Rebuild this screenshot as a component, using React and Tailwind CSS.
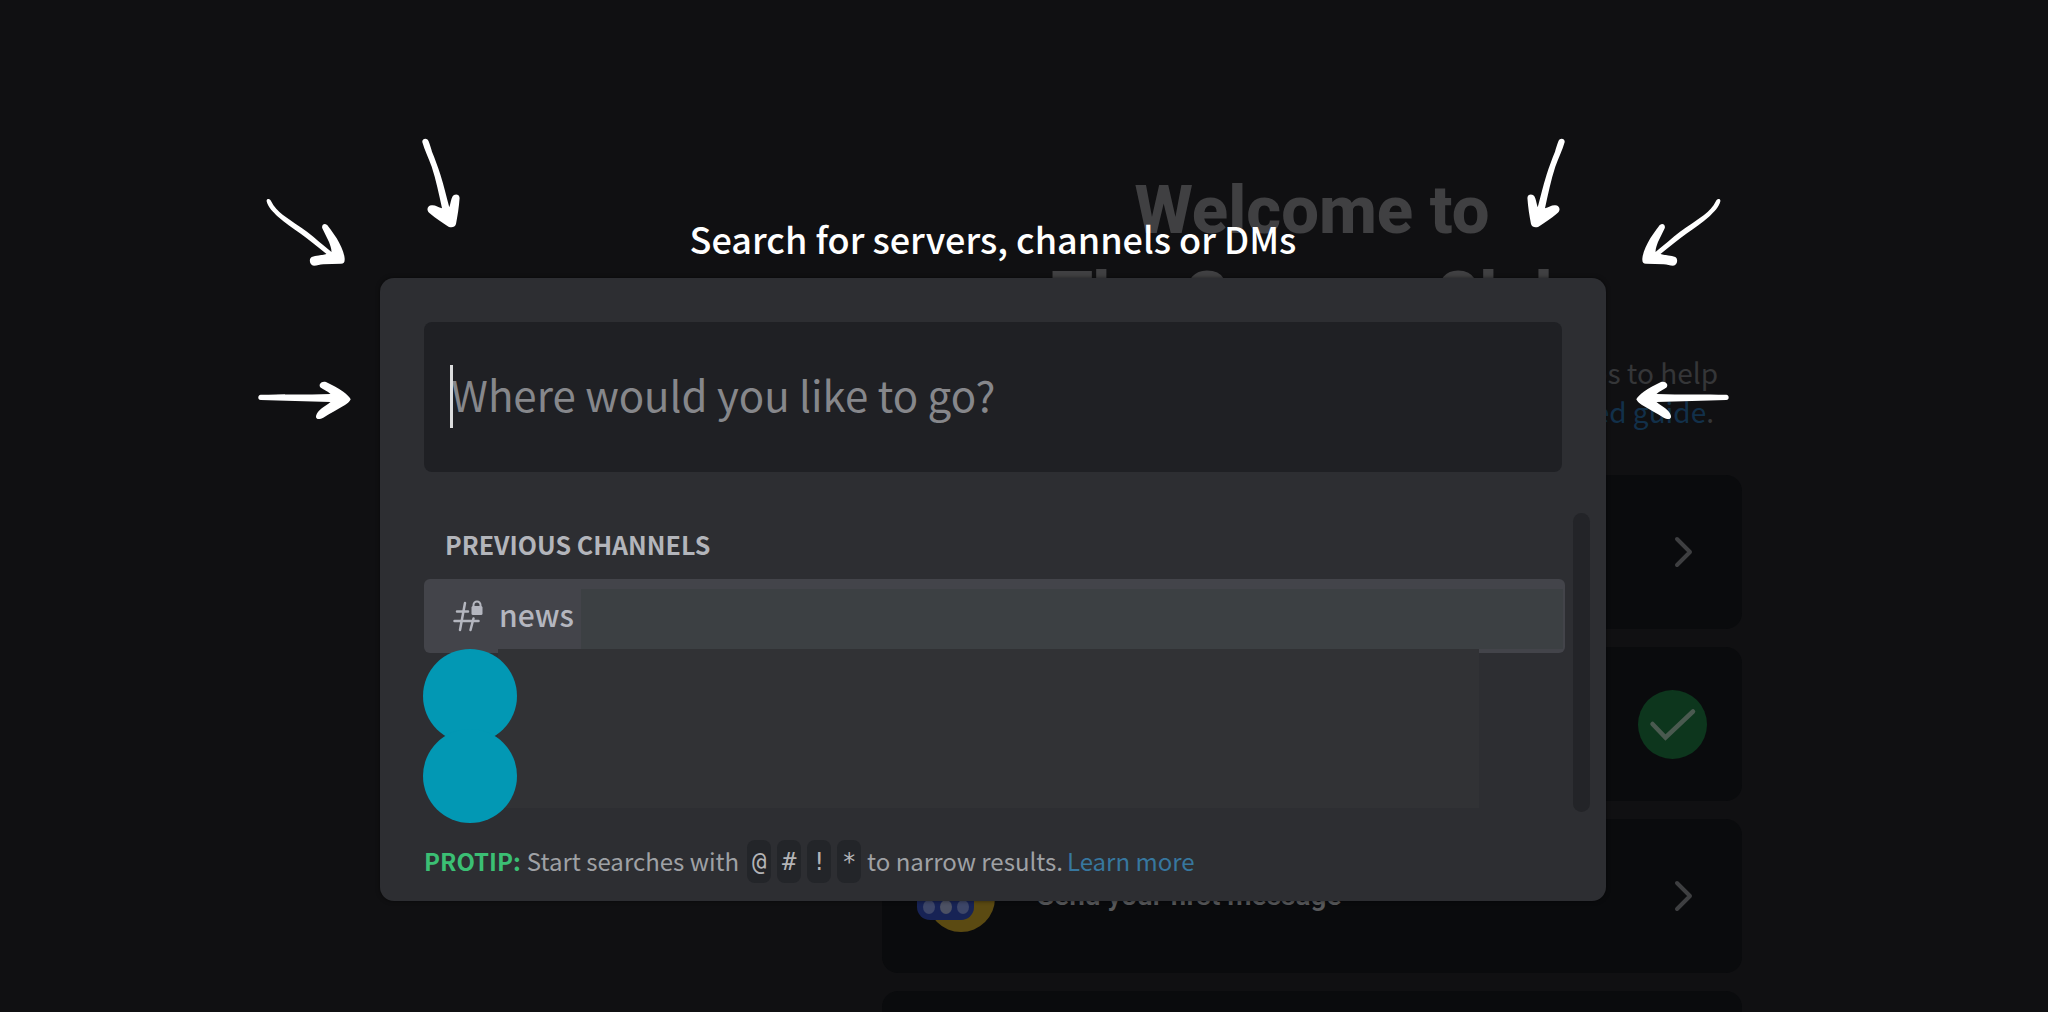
import React from "react";

const UI = "font-['Noto_Sans_CJK_SC','Noto_Sans',sans-serif]";
const DISPLAY = "font-['Roboto','Noto_Sans',sans-serif]";

function Chevron() {
  return (
    <svg viewBox="0 0 20 32" className="mr-12 h-8 w-5" fill="none" stroke="#3e3f41" strokeWidth="4" strokeLinecap="round" strokeLinejoin="round" aria-hidden="true">
      <path d="M3 3 L16 16 L3 29" />
    </svg>
  );
}

function DoneBadge() {
  return (
    <span className="mr-[35px] flex h-[69px] w-[69px] items-center justify-center rounded-full bg-[#0d361d]">
      <svg viewBox="0 0 69 69" className="h-full w-full" fill="none" stroke="#4a5a50" strokeWidth="4.500" strokeLinecap="round" aria-hidden="true">
        <path d="M14.500 34 L27.500 47.500 L55 21.500" />
      </svg>
    </span>
  );
}

function MessageArt() {
  return (
    <svg viewBox="0 0 84 84" className="ml-8 h-[84px] w-[84px]" aria-hidden="true">
      <circle cx="47" cy="44" r="34" fill="#5b4a12" />
      <rect x="3" y="30" width="57" height="36" rx="13" fill="#172355" />
      <ellipse cx="15" cy="53" rx="6" ry="7" fill="#3d4668" />
      <ellipse cx="32" cy="53" rx="6" ry="7" fill="#4c5163" />
      <ellipse cx="49" cy="53" rx="6" ry="7" fill="#3d4668" />
    </svg>
  );
}

function SetupCard({ art, title, end }) {
  return (
    <li>
      <button type="button" className="flex h-[154px] w-full items-center rounded-2xl bg-[#0a0b0d]">
        {art}
        {title && <span className={"ml-[39px] text-[28px] font-semibold text-[#57585a] " + DISPLAY}>{title}</span>}
        <span className="ml-auto">{end}</span>
      </button>
    </li>
  );
}

function WelcomePage() {
  return (
    <section className="mr-[306px] ml-auto w-[860px] pt-[167px]">
      <h1 className={"text-center text-[67px] leading-[86px] font-extrabold text-[#404042] " + DISPLAY}>
        Welcome to
        <br />
        The Gamers Club
      </h1>
      <p className="mt-[14px] flex flex-col pr-6 text-right text-[28px] leading-[39px] whitespace-nowrap text-[#353638]">
        <span>This is your brand new, shiny server. Here are some steps to help</span>
        <span className="pr-1">
          you get started. For more, check out our <a href="#guide" className="text-[#12304a]">Getting started guide</a>.
        </span>
      </p>
      <ul className="mt-11 flex flex-col gap-[18px]">
        <SetupCard end={<Chevron />} />
        <SetupCard end={<DoneBadge />} />
        <SetupCard art={<MessageArt />} title="Send your first message" end={<Chevron />} />
        <SetupCard end={<Chevron />} />
      </ul>
    </section>
  );
}

function Arrows({ className }) {
  return (
    <svg viewBox="0 0 204 284" className={"absolute -top-[140px] h-[284px] w-[204px] " + className} fill="#fff" aria-hidden="true">
      <path d="M166.300 4 C166 0.500 171 -0.500 172.500 3 C174 7 175 10 176 13.700 C179 21 182 29 184.500 37 C188 48 190.500 59 193.300 69.300 C194.500 66 195 61 196.500 58.500 C198 55.500 203.500 55.500 203.600 60 C203 69 201.500 78 200 86 C199 89 196 90 192.500 88.700 C186 85 179.500 80 174 75.600 C169.500 72.500 171.500 67 176 67.200 C179.500 67 182.500 69.300 186 70.300 C183 56 180 42 175.700 28.700 C172.500 20 168.500 12 166.300 4 Z" />
      <path d="M10.700 63.500 C10 60.500 13.500 60 15 63 C18 69 22 73 27 77 C35 83 43 88 51 93.700 C59 100 67 107 75.500 114 C75.500 110 74 107 73 104 L66.300 90.300 C65 86 70 84 72.500 88.700 C75 92 78 96 80.700 100.300 C84.500 107 88 114 88.600 120 C89 124 88 125.700 85 125.700 C79 125.700 73 126 67.300 126.300 C64 126.500 61 127.500 58 127.700 C53.500 127.500 52.500 121 55.700 119 C60 117.300 65 117.500 70.500 116 C62 109 53 102 44 95.300 C37 90 29 85 22 78.700 C17 74 12 69 10.700 63.500 Z" />
      <path d="M4.700 256.700 C25 256.500 50 256.800 74.500 256 C71.500 253 67.500 251.500 64.500 249.500 C62 246.500 65.500 242.500 70 244 C76 247 82 250 87.300 253.700 C91 256.500 93.500 259 94.700 261.300 C93.500 264 91.500 265.500 89 267 C81.500 271.500 74 275.500 67.300 279.700 C64 281.500 59.500 282 60 278 C61.500 271.500 69 268.500 74.500 264 C51 263.500 27 262.800 4.700 262 C1.500 262 1.500 257 4.700 256.700 Z" />
    </svg>
  );
}

function LockedHash() {
  return (
    <svg viewBox="0 0 34 34" className="h-[34px] w-[34px]" fill="none" stroke="#b4b6bf" strokeWidth="2.500" strokeLinecap="round" aria-hidden="true">
      <path d="M13 4 L8 31 M21.500 19.500 L18.500 31 M5 12.500 H16 M2.500 22 H26.500" />
      <path d="M21.500 9 V6 A3.500 3.500 0 0 1 28.500 6 V9" strokeWidth="2" />
      <rect x="19.500" y="7" width="11" height="9" rx="1.500" fill="#b4b6bf" stroke="none" />
    </svg>
  );
}

function Key({ children }) {
  return (
    <kbd className="flex h-[43px] w-6 items-center justify-center rounded-lg bg-[#232529] font-['DejaVu_Sans_Mono',monospace] text-[24px] text-[#b3b4b7]">
      {children}
    </kbd>
  );
}

function QuickSwitcher() {
  return (
    <div className="relative w-full max-w-[1226px]">
      <label htmlFor="switcher" className="absolute bottom-full left-0 w-full pb-[13px] text-center text-[36px] leading-[54px] font-medium whitespace-nowrap text-white">
        Search for servers, channels or DMs
      </label>
      <div role="dialog" aria-label="Quick switcher" className="rounded-[14px] bg-[#2d2e32] px-11 pt-11 pb-[18px] shadow-[0_0_4px_rgba(0,0,0,0.5)]">
        <div className="relative">
          <input id="switcher" type="text" placeholder="Where would you like to go?" className="h-[150px] w-full rounded-lg bg-[#1f2024] px-[27px] pb-2 text-[42px] text-white outline-none placeholder:text-[#86878b]" />
          <span className="absolute top-[43px] left-[26px] h-[63px] w-[3px] bg-[#dcddde]" />
        </div>

        <div className="mt-[41px] -mr-7 flex gap-2">
          <div className="min-w-0 flex-1">
            <h2 className="flex h-[66px] items-center pb-[2px] pl-[21px] text-[25px] font-bold text-[#b3b5bb]">PREVIOUS CHANNELS</h2>
            <button type="button" className="flex h-[74px] w-full items-center rounded-md bg-[#43444a] pl-7 text-[30px] font-medium text-[#b4b6bf]">
              <LockedHash />
              <span className="ml-[13px] pb-1">news</span>
              <span className="mt-[6px] mr-[2px] ml-[7px] h-[60px] flex-1 bg-[#3c4043]" />
            </button>
            <div className="relative -mt-1 mr-[86px] ml-[74px] h-[159px] bg-[#313235]">
              <ul className="absolute top-0 -left-[75px]">
                <li className="h-[94px] w-[94px] rounded-full bg-[#0298b4]" />
                <li className="-mt-[14px] h-[94px] w-[94px] rounded-full bg-[#0298b4]" />
              </ul>
            </div>
          </div>
          <div className="h-[299px] w-[17px] rounded-full bg-[#232428]" />
        </div>

        <div className="mt-7 flex items-center text-[24px] whitespace-nowrap text-[#9fa1a5]">
          <strong className="pb-[2px] font-bold text-[#3bbf74]">PROTIP:</strong>
          <span className="ml-[6px] pb-[2px]">Start searches with</span>
          <span className="mr-[6px] ml-2 flex gap-[6px]">
            <Key>@</Key>
            <Key>#</Key>
            <Key>!</Key>
            <Key>*</Key>
          </span>
          <span className="pb-[2px]">to narrow results.</span>
          <a href="#learn" className="ml-1 pb-[2px] text-[#37779f]">Learn more</a>
        </div>
      </div>
      <Arrows className="-left-[124px]" />
      <Arrows className="-right-[125px] -scale-x-100" />
    </div>
  );
}

export default function App() {
  return (
    <main className={"relative h-screen overflow-hidden bg-[#101012] " + UI}>
      <WelcomePage />
      <div className="absolute inset-0 flex items-start justify-center pt-[278px] pr-[62px]">
        <QuickSwitcher />
      </div>
    </main>
  );
}
